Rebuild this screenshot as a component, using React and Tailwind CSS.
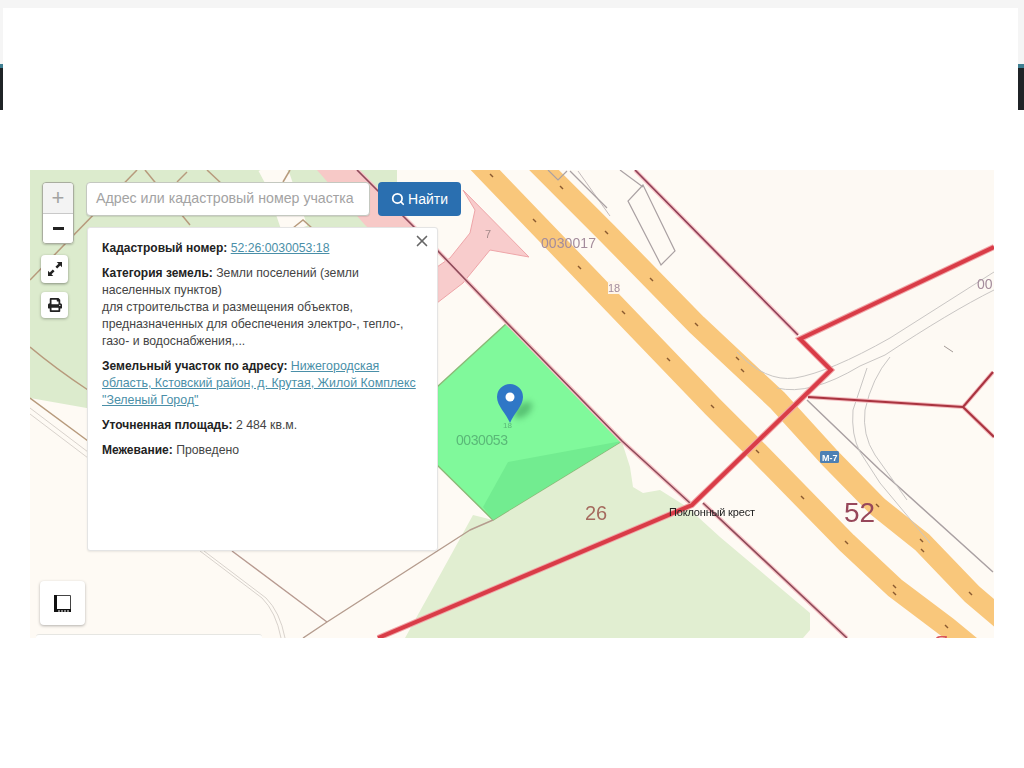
import { FaPrint } from "react-icons/fa";
import { Search, X } from "lucide-react";

const roadTicks = [
  [492, 176], [535, 221], [580, 268], [624, 313], [669, 360], [713, 407], [758, 452], [803, 498], [847, 543], [895, 587], [895, 594], [947, 627],
  [562, 188], [607, 233], [652, 280], [697, 325], [738, 359], [743, 371], [922, 541], [923, 551], [971, 594], [878, 506],
];

const FONT = "font-['Liberation_Sans',Arial,sans-serif]";

const MapCanvas = () => (
  <svg viewBox="30 170 964 468" className="absolute inset-0 h-full w-full blur-[0.4px]">
    <rect x="30" y="170" width="964" height="468" fill="#fefaf4" />
    <rect x="700" y="170" width="294" height="170" fill="#fdf9f3" />

    {/* green land, top left */}
    <polygon points="30,170 397,170 397,240 437,275 437,470 30,398" fill="#dcebcd" />
    <polygon points="30,398 88,441 260,560 30,640" fill="#fefaf4" />
    <polyline points="270,165 278,180 295,230" fill="none" stroke="#fefaf4" strokeWidth="26" />

    {/* green land, bottom */}
    <polygon
      points="622,442 630,467 633,487 643,493 660,490 687,507 720,537 810,613 810,630 803,638 405,638 430,593 473,515 493,520"
      fill="#e1eed1"
    />

    {/* pink strips */}
    <polygon points="317,170 357,170 437,250 437,300 405,262 365,225" fill="#f7c9c7" />
    <polygon points="463,190 529,257 490,250 463,283 437,303 437,267 450,258 470,233 475,210" fill="#f8cccc" stroke="#eea5a8" strokeWidth="1" />
    <text x="485" y="238" fontSize="11" fill="#a58a8a" fontFamily="Liberation Sans">7</text>

    {/* parcel lines, upper left */}
    <g fill="none" stroke="#b79a7c" strokeWidth="1.5">
      <path d="M137 170 L30 280" />
      <path d="M145 170 L190 225" />
      <path d="M187 172 L177 182" />
      <path d="M207 170 L222 184" />
      <path d="M290 170 L283 182" />
      <path d="M293 228 L303 220 L312 228" />
      <path d="M30 347 Q55 368 88 390" />
      <path d="M30 398 L88 441" />
    </g>
    <g fill="none" stroke="#d8d2cc" strokeWidth="1">
      <path d="M30 408 L88 452" />
      <path d="M30 414 L88 458" />
      <path d="M200 551 L262 598 Q276 612 281 638" />
      <path d="M204 551 L266 598 Q280 612 285 638" />
    </g>

    {/* orange roads */}
    <polyline points="466,150 713,407 758,452 847,543 895,588 947,627 975,650" fill="none" stroke="#f9c77b" strokeWidth="21" />
    <polyline points="524,150 607,233 697,325 777,400 830,458 878,507 922,542 972,594 1005,622" fill="none" stroke="#f9c77b" strokeWidth="21" />
    {roadTicks.map(([x, y]) => (
      <path key={`${x}-${y}`} d={`M${x - 2} ${y - 2} L${x + 1} ${y + 1}`} stroke="#8a5a30" strokeWidth="1.4" />
    ))}

    {/* selected parcel */}
    <polygon points="437,387 507,323 622,441 493,520 437,465" fill="#80f99b" stroke="#8cb877" strokeWidth="1.4" />
    <polygon points="493,520 483,507 508,462 622,441" fill="#72ec90" />
    <text x="456" y="445" fontSize="14" fill="#5ab878" fontFamily="Liberation Sans" textLength="52">0030053</text>
    <text x="503" y="428" fontSize="8" fill="#5ab878" fontFamily="Liberation Sans">18</text>

    {/* gray outlines, thin roads */}
    <g fill="none" stroke="#aaa1a3" strokeWidth="1.2">
      <path d="M643 185 L628 201 L661 265 L675 251 Z" />
      <path d="M620 170 L643 187" />
      <path d="M548 170 L558 180 L567 171" />
      <path d="M570 171 L607 208" />
      <path d="M578 171 L610 216" strokeWidth="0.7" />
      <path d="M807 400 L880 470 L993 572" strokeWidth="1.5" />
    </g>
    <g fill="none" stroke="#c9c6c4" strokeWidth="1">
      <path d="M737 352 Q765 382 795 378 Q830 372 890 338 L994 272" />
      <path d="M777 388 Q810 396 860 366 L885 355 Q950 312 994 290" />
      <path d="M867 368 L853 410 Q851 435 860 452 L880 483 L930 543" />
      <path d="M890 357 Q872 378 865 410 Q862 435 875 455 L907 500" />
    </g>
    <path d="M944 346 L953 352" stroke="#a39a96" strokeWidth="1" />

    {/* maroon boundary */}
    <g fill="none" strokeLinejoin="round">
      <path d="M357 170 L437 250 L507 323 L622 441 L690 503 M703 503 L847 638" stroke="#f7c3c7" strokeWidth="4" />
      <path d="M357 170 L437 250 L507 323 L622 441 L690 503 M703 503 L847 638" stroke="#8d4a58" strokeWidth="1.6" />
      <path d="M635 170 L798 335" stroke="#f7c3c7" strokeWidth="4" />
      <path d="M635 170 L798 335" stroke="#8d3f55" strokeWidth="1.6" />
      <path d="M808 397 L963 407 L993 372 M963 407 L994 437" stroke="#f3b9bd" strokeWidth="4" />
      <path d="M808 397 L963 407 L993 372 M963 407 L994 437" stroke="#a9333f" strokeWidth="2" />
      <path d="M232 551 L327 622" stroke="#b79a90" strokeWidth="1.4" />
      <path d="M303 638 L327 622 L470 530 L493 520" stroke="#b59c8e" strokeWidth="1.4" />
    </g>

    {/* thick red boundary */}
    <g fill="none" strokeLinejoin="miter">
      <path d="M994 247 L800 339 L831 370 L692 505 L378 638" stroke="#f1a5a8" strokeWidth="6" />
      <path d="M994 247 L800 339 L831 370 L692 505 L378 638" stroke="#d93c47" strokeWidth="4" />
    </g>

    {/* labels */}
    <text x="541" y="248" fontSize="14" fill="#a48c9c" fontFamily="Liberation Sans" textLength="55">0030017</text>
    <text x="977" y="289" fontSize="14" fill="#a48c9c" fontFamily="Liberation Sans">00</text>
    <rect x="608" y="281" width="12" height="13" fill="#fff6ea" />
    <text x="608" y="292" fontSize="11" fill="#a48c9c" fontFamily="Liberation Sans">18</text>
    <text x="585" y="520" fontSize="20" fill="#a56b5f" fontFamily="Liberation Sans">26</text>
    <text x="844" y="522" fontSize="28" fill="#97475a" fontFamily="Liberation Sans">52</text>
    <text x="669" y="516" fontSize="11" fill="#222222" fontFamily="Liberation Sans" textLength="86">Поклонный крест</text>
    <rect x="820" y="451" width="19" height="12" rx="1.5" fill="#4d80b4" />
    <text x="822" y="461" fontSize="9" fontWeight="700" fill="#ffffff" fontFamily="Liberation Sans">M-7</text>
    <text x="934" y="650" fontSize="20" fill="#d9555c" fontFamily="Liberation Sans">Я</text>

    {/* marker */}
    <ellipse cx="523" cy="410" rx="11" ry="6" fill="#2f8a4b" opacity="0.5" transform="rotate(-40 523 410)" className="blur-[3px]" />
    <path d="M510 423 C506 413 497 406 497 397 A13 13 0 0 1 523 397 C523 406 514 413 510 423 Z" fill="#2f77c6" />
    <circle cx="510" cy="397" r="4.5" fill="#ffffff" />
  </svg>
);

const ExpandIcon = () => (
  <svg viewBox="0 0 16 16" className="h-[14px] w-[14px]" fill="#222222">
    <path d="M16 0 L16 6 L14 4 L10.5 7.5 L8.5 5.5 L12 2 L10 0 Z" />
    <path d="M0 16 L0 10 L2 12 L5.5 8.5 L7.5 10.5 L4 14 L6 16 Z" />
  </svg>
);

const RulerIcon = () => (
  <svg viewBox="0 0 17 17" className="h-[17px] w-[17px]">
    <path d="M0 0 H3 V14 H17 V17 H0 Z" fill="#111111" />
    <path d="M3 0.5 H16.5 V14" fill="none" stroke="#444444" strokeWidth="1" />
    <path d="M5 15 V17 M8 15 V17 M11 15 V17 M14 15 V17" stroke="#ffffff" strokeWidth="1" />
  </svg>
);

const InfoCard = () => (
  <div className="absolute left-[57px] top-[57px] flex h-[324px] w-[351px] flex-col gap-[8px] rounded-[3px] border border-[#e4e4e4] bg-white pl-[14px] pr-[10px] pt-[12px] text-[12.25px] leading-[17px] text-[#444444] shadow-[0_1px_2px_rgba(0,0,0,0.08)]">
    <X className="absolute right-[6px] top-[4px] h-[18px] w-[18px] text-[#666666]" strokeWidth={2.2} />
    <p>
      <b className="text-[12px] text-[#222222]">Кадастровый номер:</b>{" "}
      <span className="text-[#4a8fa8] underline">52:26:0030053:18</span>
    </p>
    <p>
      <b className="text-[12px] text-[#222222]">Категория земель:</b> Земли поселений (земли
      <br />
      населенных пунктов)
      <br />
      для строительства и размещения объектов,
      <br />
      предназначенных для обеспечения электро-, тепло-,
      <br />
      газо- и водоснабжения,...
    </p>
    <p>
      <b className="text-[12px] text-[#222222]">Земельный участок по адресу:</b>{" "}
      <span className="text-[12.4px] text-[#4a8fa8] underline">
        Нижегородская
        <br />
        область, Кстовский район, д. Крутая, Жилой Комплекс
        <br />
        "Зеленый Город"
      </span>
    </p>
    <p>
      <b className="text-[12px] text-[#222222]">Уточненная площадь:</b> 2 484 кв.м.
    </p>
    <p>
      <b className="text-[12px] text-[#222222]">Межевание:</b> Проведено
    </p>
  </div>
);

const MapControls = () => (
  <>
    <div className="absolute left-[12px] top-[12px] flex h-[62px] w-[32px] flex-col overflow-hidden rounded-[4px] border border-[#a9ad9f] shadow-[0_1px_2px_rgba(0,0,0,0.2)]">
      <div className="flex flex-1 items-center justify-center border-b border-[#c9c9c9] bg-[#f3f3f3] text-[22px] font-light leading-none text-[#a3a3a3]">+</div>
      <div className="flex flex-1 items-center justify-center bg-white">
        <span className="h-[3px] w-[11px] bg-[#222222]" />
      </div>
    </div>
    <div className="absolute left-[11px] top-[85px] flex h-[28px] w-[27px] items-center justify-center rounded-[4px] bg-white shadow-[0_1px_3px_rgba(0,0,0,0.4)]">
      <ExpandIcon />
    </div>
    <div className="absolute left-[11px] top-[122px] flex h-[26px] w-[27px] items-center justify-center rounded-[4px] bg-white shadow-[0_1px_3px_rgba(0,0,0,0.3)]">
      <FaPrint className="h-[14px] w-[14px] text-[#222222]" />
    </div>
    <div className="absolute left-[10px] top-[411px] flex h-[44px] w-[45px] items-center justify-center rounded-[4px] bg-white shadow-[0_1px_3px_rgba(0,0,0,0.3)]">
      <RulerIcon />
    </div>
    <div className="absolute left-[6px] top-[464px] h-[4px] w-[226px] rounded-t-[3px] border-t border-[#e6e6e2] bg-white" />
  </>
);

const SearchBar = () => (
  <div className="absolute left-[56px] top-[12px] flex items-center gap-[8px]">
    <div className="flex h-[34px] w-[284px] items-center rounded-[4px] border border-[#c4c8c0] bg-white pl-[9px] text-[14.2px] text-[#a3a3a3] shadow-[0_1px_1px_rgba(0,0,0,0.1)]">
      Адрес или кадастровый номер участка
    </div>
    <div className="flex h-[34px] w-[83px] items-center justify-center gap-[3px] rounded-[4px] bg-[#2a6fb0] text-[14px] text-white">
      <Search className="h-[14px] w-[14px]" strokeWidth={3} />
      Найти
    </div>
  </div>
);

export default function App() {
  return (
    <div className={`h-[768px] w-[1024px] overflow-hidden bg-white ${FONT}`}>
      <header className="flex h-[110px]">
        <div className="flex w-[3px] flex-col">
          <div className="h-[64px] bg-[#f5f5f5]" />
          <div className="h-[4px] bg-[#3f7f92]" />
          <div className="flex-1 bg-[#1f2326]" />
        </div>
        <div className="flex flex-1 flex-col">
          <div className="h-[8px] bg-[#f5f5f5]" />
          <div className="flex-1 bg-white" />
        </div>
        <div className="flex w-[6px] flex-col">
          <div className="h-[64px] bg-[#f5f5f5]" />
          <div className="h-[4px] bg-[#3f7f92]" />
          <div className="flex-1 bg-[#1f2326]" />
        </div>
      </header>
      <main className="ml-[30px] mt-[60px] h-[468px] w-[964px]">
        <div className="relative h-full w-full overflow-hidden">
          <MapCanvas />
          <MapControls />
          <SearchBar />
          <InfoCard />
        </div>
      </main>
    </div>
  );
}
